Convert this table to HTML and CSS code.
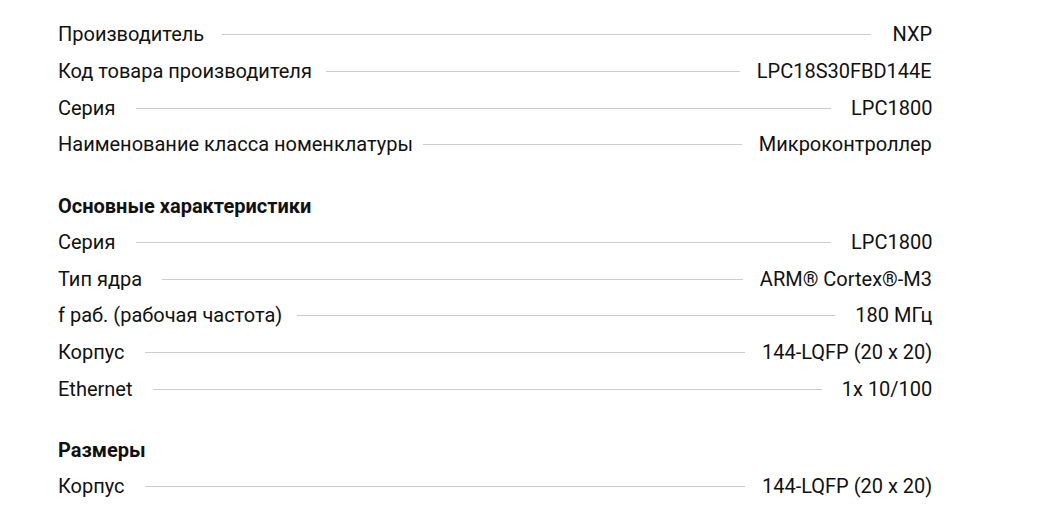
FILE: index.html
```html
<!DOCTYPE html>
<html lang="ru">
<head>
<meta charset="utf-8">
<link rel="stylesheet" href="styles.css">
</head>
<body>
<div class="specs">
  <div class="group">
    <div class="row"><span class="label">Производитель</span><span class="dots"></span><span class="value">NXP</span></div>
    <div class="row"><span class="label">Код товара производителя</span><span class="dots"></span><span class="value">LPC18S30FBD144E</span></div>
    <div class="row"><span class="label">Серия</span><span class="dots"></span><span class="value">LPC1800</span></div>
    <div class="row"><span class="label">Наименование класса номенклатуры</span><span class="dots"></span><span class="value">Микроконтроллер</span></div>
  </div>
  <div class="group">
    <div class="title">Основные характеристики</div>
    <div class="row"><span class="label">Серия</span><span class="dots"></span><span class="value">LPC1800</span></div>
    <div class="row"><span class="label">Тип ядра</span><span class="dots"></span><span class="value">ARM® Cortex®-M3</span></div>
    <div class="row"><span class="label">f раб. (рабочая частота)</span><span class="dots"></span><span class="value">180 МГц</span></div>
    <div class="row"><span class="label">Корпус</span><span class="dots"></span><span class="value">144-LQFP (20 x 20)</span></div>
    <div class="row"><span class="label">Ethernet</span><span class="dots"></span><span class="value">1x 10/100</span></div>
  </div>
  <div class="group">
    <div class="title">Размеры</div>
    <div class="row"><span class="label">Корпус</span><span class="dots"></span><span class="value">144-LQFP (20 x 20)</span></div>
  </div>
</div>
</body>
</html>
```

FILE: styles.css
```css
html, body {
  margin: 0;
  padding: 0;
  background: #fff;
}
body {
  font-family: Roboto, "Liberation Sans", sans-serif;
  font-size: 20px;
  color: #111;
}
.specs {
  width: 874px;
  margin-left: 58px;
  padding-top: 16.67px;
  display: flex;
  flex-direction: column;
  gap: 24.33px;
}
.group {
  display: flex;
  flex-direction: column;
}
.row, .title {
  height: 36.67px;
  display: flex;
  align-items: center;
}
.title {
  font-weight: 700;
}
.dots {
  flex: 1;
  height: 1px;
  background: #ccc;
  margin: 0 23px;
}
.label, .value {
  display: inline-block;
  white-space: nowrap;
  font-size: 19.29px;
  transform: scale(1.037);
}
.label {
  transform-origin: left center;
}
.value {
  transform-origin: right center;
}
```
